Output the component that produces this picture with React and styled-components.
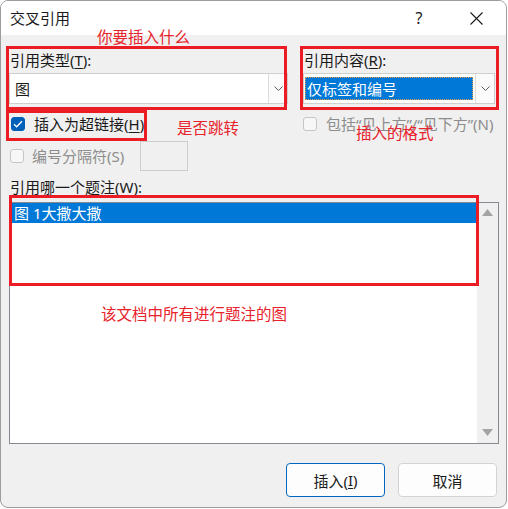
import React from "react";
import styled, { createGlobalStyle } from "styled-components";

const Global = createGlobalStyle`
  html, body { margin: 0; padding: 0; background: #ffffff; }
  body { font-family: "Noto Sans", "Noto Sans CJK SC", sans-serif; color: #1a1a1a; }
  * { box-sizing: border-box; }
`;

const Window = styled.div`
  position: relative;
  width: 507px;
  height: 508px;
  border: 1px solid #9c9c9c;
  border-radius: 8px;
  overflow: hidden;
  display: flex;
  flex-direction: column;
  background: #f0f0f0;
`;

const TitleBar = styled.div`
  height: 34px;
  flex: none;
  background: #ffffff;
  display: flex;
  align-items: center;
  gap: 11px;
  padding-left: 9px;
  padding-right: 7px;
`;

const Title = styled.div`
  flex: 1;
  font-size: 15px;
  line-height: 20px;
  color: #1a1a1a;
`;

const CtrlBtn = styled.div`
  width: 46px;
  height: 34px;
  display: flex;
  align-items: center;
  justify-content: center;
  font-size: 16px;
  color: #1a1a1a;
`;

const Body = styled.div`
  flex: 1;
  padding: 15px 7px 0 8px;
  display: flex;
  flex-direction: column;
`;

const TopGrid = styled.div`
  display: grid;
  grid-template-columns: 279px 192px;
  column-gap: 15px;
`;

const Col = styled.div`
  display: flex;
  flex-direction: column;
`;

const Label = styled.div`
  font-size: 15px;
  line-height: 20px;
  padding-left: 1px;
  color: ${(p) => (p.$disabled ? "#8d8d8d" : "#1a1a1a")};
  white-space: nowrap;
`;

const Key = styled.span`
  text-decoration: underline;
  text-underline-offset: 2px;
`;

const Combo = styled.div`
  margin-top: 3px;
  height: 31px;
  background: #ffffff;
  border: 1px solid #cfcfcf;
  display: flex;
  align-items: stretch;
`;

const ComboValue = styled.div`
  flex: 1;
  display: flex;
  align-items: center;
  padding: 3px 2px 3px 1px;
  font-size: 15px;
`;

const ValueText = styled.div`
  flex: 1;
  height: 100%;
  display: flex;
  align-items: center;
  padding-left: ${(p) => (p.$selected ? "2px" : "4px")};
  background: ${(p) => (p.$selected ? "#0078d7" : "transparent")};
  color: ${(p) => (p.$selected ? "#ffffff" : "#1a1a1a")};
  outline: ${(p) => (p.$selected ? "1px dotted #e89a4a" : "none")};
  outline-offset: -1px;
`;

const ComboBtn = styled.div`
  width: 19px;
  border-left: 1px solid #dcdcdc;
  background: #fbfbfb;
  display: flex;
  align-items: center;
  justify-content: center;
`;

const CheckRow = styled.div`
  margin-top: 10px;
  height: 20px;
  display: flex;
  align-items: center;
  gap: 8px;
  padding-left: ${(p) => p.$indent || 0}px;
`;

const Box = styled.span`
  width: 14px;
  height: 14px;
  flex: none;
  border-radius: 3px;
  display: flex;
  align-items: center;
  justify-content: center;
  background: ${(p) => (p.$checked ? "#005fb8" : "#f7f7f7")};
  border: 1px solid ${(p) => (p.$checked ? "#005fb8" : "#c6c6c6")};
`;

const SepRow = styled.div`
  margin-top: 7px;
  display: grid;
  grid-template-columns: 131px 48px;
  align-items: center;
`;

const SepCheck = styled.div`
  display: flex;
  align-items: center;
  gap: 7px;
  padding-left: 1px;
`;

const SepInput = styled.div`
  height: 30px;
  border: 1px solid #cdcdcd;
  background: #f0f0f0;
`;

const ListLabel = styled(Label)`
  margin-top: 6px;
`;

const ListBox = styled.div`
  margin-top: 5px;
  height: 242px;
  border: 1px solid #858a91;
  background: #ffffff;
  display: flex;
`;

const ListArea = styled.div`
  flex: 1;
  padding-left: 2px;
`;

const ListItem = styled.div`
  height: 20px;
  line-height: 20px;
  padding-left: 2px;
  font-size: 15px;
  background: ${(p) => (p.$selected ? "#0078d7" : "transparent")};
  color: ${(p) => (p.$selected ? "#ffffff" : "#1a1a1a")};
`;

const ScrollBar = styled.div`
  width: 21px;
  background: #f0f0f0;
  display: flex;
  flex-direction: column;
  justify-content: space-between;
  align-items: center;
  padding: 6px 0 7px;
`;

const Footer = styled.div`
  margin-top: 19px;
  display: flex;
  justify-content: flex-end;
  gap: 13px;
  padding-right: 2px;
`;

const Button = styled.div`
  width: 99px;
  height: 34px;
  border-radius: 4px;
  background: #fdfdfd;
  border: 1px solid ${(p) => (p.$primary ? "#0067c0" : "#d3d3d3")};
  display: flex;
  align-items: center;
  justify-content: center;
  font-size: 15px;
  color: #1a1a1a;
`;

const RedBox = styled.div`
  position: absolute;
  border: 3px solid #ec1c24;
  pointer-events: none;
`;

const RedNote = styled.div`
  position: absolute;
  color: #e8232b;
  font-family: "Noto Sans CJK SC", sans-serif;
  font-size: 15.5px;
  line-height: 20px;
  white-space: nowrap;
  pointer-events: none;
`;

const Chevron = () => (
  <svg width="9" height="5" viewBox="0 0 9 5">
    <path d="M0.5 0.5 L4.5 4.5 L8.5 0.5" fill="none" stroke="#5f5f5f" strokeWidth="1" />
  </svg>
);

const Tick = () => (
  <svg width="10" height="8" viewBox="0 0 10 8">
    <path d="M1 4.2 L3.7 6.8 L9 1.2" fill="none" stroke="#ffffff" strokeWidth="1.3" />
  </svg>
);

const Arrow = ({ down }) => (
  <svg width="11" height="7" viewBox="0 0 11 7">
    <path d={down ? "M0 0 H11 L5.5 7 Z" : "M0 7 H11 L5.5 0 Z"} fill="#a3a3a3" />
  </svg>
);

const Close = () => (
  <svg width="13" height="13" viewBox="0 0 13 13">
    <path d="M0.5 0.5 L12.5 12.5 M12.5 0.5 L0.5 12.5" stroke="#1a1a1a" strokeWidth="1.1" />
  </svg>
);

export default function App() {
  return (
    <>
      <Global />
      <Window>
        <TitleBar>
          <Title>交叉引用</Title>
          <CtrlBtn>?</CtrlBtn>
          <CtrlBtn>
            <Close />
          </CtrlBtn>
        </TitleBar>
        <Body>
          <TopGrid>
            <Col>
              <Label>
                引用类型(<Key>T</Key>):
              </Label>
              <Combo>
                <ComboValue>
                  <ValueText>图</ValueText>
                </ComboValue>
                <ComboBtn>
                  <Chevron />
                </ComboBtn>
              </Combo>
              <CheckRow $indent={2}>
                <Box $checked>
                  <Tick />
                </Box>
                <Label>
                  插入为超链接(<Key>H</Key>)
                </Label>
              </CheckRow>
            </Col>
            <Col>
              <Label>
                引用内容(<Key>R</Key>):
              </Label>
              <Combo>
                <ComboValue>
                  <ValueText $selected>仅标签和编号</ValueText>
                </ComboValue>
                <ComboBtn>
                  <Chevron />
                </ComboBtn>
              </Combo>
              <CheckRow>
                <Box />
                <Label $disabled>包括“见上方”/“见下方”(N)</Label>
              </CheckRow>
            </Col>
          </TopGrid>
          <SepRow>
            <SepCheck>
              <Box />
              <Label $disabled>编号分隔符(S)</Label>
            </SepCheck>
            <SepInput />
          </SepRow>
          <ListLabel>
            引用哪一个题注(<Key>W</Key>):
          </ListLabel>
          <ListBox>
            <ListArea>
              <ListItem $selected>图 1大撒大撒</ListItem>
            </ListArea>
            <ScrollBar>
              <Arrow />
              <Arrow down />
            </ScrollBar>
          </ListBox>
          <Footer>
            <Button $primary>
              插入(<Key>I</Key>)
            </Button>
            <Button>取消</Button>
          </Footer>
        </Body>

        <RedBox style={{ left: 5, top: 45, width: 281, height: 64 }} />
        <RedBox style={{ left: 299, top: 45, width: 199, height: 64 }} />
        <RedBox style={{ left: 5, top: 109, width: 141, height: 31 }} />
        <RedBox style={{ left: 8, top: 194, width: 470, height: 91 }} />
        <RedNote style={{ left: 96, top: 25 }}>你要插入什么</RedNote>
        <RedNote style={{ left: 176, top: 116 }}>是否跳转</RedNote>
        <RedNote style={{ left: 355, top: 121 }}>插入的格式</RedNote>
        <RedNote style={{ left: 100, top: 302 }}>该文档中所有进行题注的图</RedNote>
      </Window>
    </>
  );
}
